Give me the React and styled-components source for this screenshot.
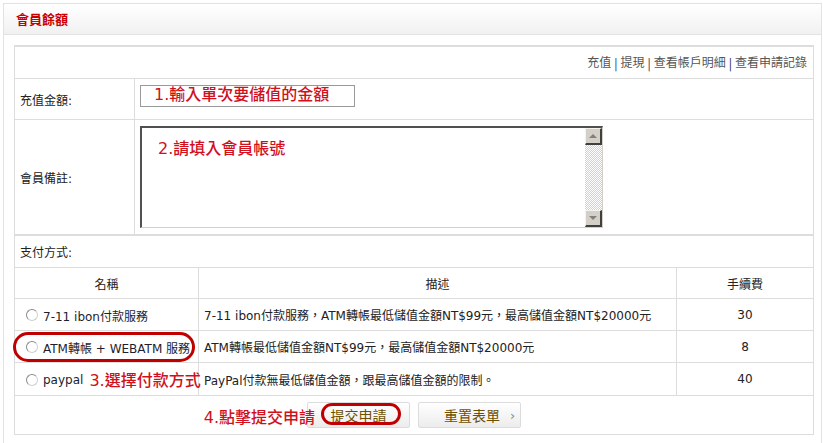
import React from 'react'
import styled, { createGlobalStyle } from 'styled-components'

const GlobalStyle = createGlobalStyle`
    body {
        margin: 0;
        background: #fff;
        font-family: "DejaVu Sans", "Noto Sans CJK TC", sans-serif;
        font-size: 12px;
        color: #333;
    }
`

const payments = [
    { id: 'ibon', name: '7-11 ibon付款服務', desc: '7-11 ibon付款服務，ATM轉帳最低儲值金額NT$99元，最高儲值金額NT$20000元', fee: 30 },
    { id: 'atm', name: 'ATM轉帳 + WEBATM 服務', desc: 'ATM轉帳最低儲值金額NT$99元，最高儲值金額NT$20000元', fee: 8, circled: true },
    { id: 'paypal', name: 'paypal', desc: 'PayPal付款無最低儲值金額，跟最高儲值金額的限制。', fee: 40, note: '3.選擇付款方式' },
]

function App() {
    return (
        <>
            <GlobalStyle />
            <Panel>
                <PanelHeader>
                    <PanelTitle>會員餘額</PanelTitle>
                </PanelHeader>
                <PanelBody>
                    <Form>
                        <LinksRow>
                            <LinkItem>充值</LinkItem><Sep>|</Sep>
                            <LinkItem>提現</LinkItem><Sep>|</Sep>
                            <LinkItem>查看帳戶明細</LinkItem><Sep>|</Sep>
                            <LinkItem>查看申請記錄</LinkItem>
                        </LinksRow>

                        <Row height={40}>
                            <Label>充值金額:</Label>
                            <Value top={6}>
                                <AmountInput>
                                    <Hint>1.輸入單次要儲值的金額</Hint>
                                </AmountInput>
                            </Value>
                        </Row>

                        <Row height={114} thick>
                            <Label>會員備註:</Label>
                            <Value center>
                                <TextArea>
                                    <TextContent>
                                        <Hint>2.請填入會員帳號</Hint>
                                    </TextContent>
                                    <ScrollBar>
                                        <ScrollButton>
                                            <Arrow up />
                                        </ScrollButton>
                                        <ScrollTrack />
                                        <ScrollButton>
                                            <Arrow />
                                        </ScrollButton>
                                    </ScrollBar>
                                </TextArea>
                            </Value>
                        </Row>

                        <Row height={31}>
                            <PlainLabel>支付方式:</PlainLabel>
                        </Row>

                        <PayHead>
                            <NameCell center>名稱</NameCell>
                            <DescCell center>描述</DescCell>
                            <FeeCell>手續費</FeeCell>
                        </PayHead>

                        {payments.map((p, i) => (
                            <PayRow key={p.id} tall={i === 2}>
                                <NameCell>
                                    <Radio />
                                    <OptionText>{p.name}</OptionText>
                                    {p.note && <InlineNote>{p.note}</InlineNote>}
                                    {p.circled && <RowCircle />}
                                </NameCell>
                                <DescCell>{p.desc}</DescCell>
                                <FeeCell>{p.fee}</FeeCell>
                            </PayRow>
                        ))}

                        <ButtonRow>
                            <Button>
                                <StepNote>4.點擊提交申請</StepNote>
                                提交申請
                                <ButtonCircle />
                            </Button>
                            <Button reset>
                                重置表單
                                <Chevron>›</Chevron>
                            </Button>
                        </ButtonRow>
                    </Form>
                </PanelBody>
            </Panel>
        </>
    )
}

export default App

const Panel = styled.div`
    margin: 3px 1px 0 3px;
    border: 1px solid #e2e2e2;
    border-bottom: none;
    height: 440px;
    box-sizing: border-box;
`

const PanelHeader = styled.div`
    height: 30px;
    display: flex;
    align-items: center;
    padding-left: 12px;
    background: linear-gradient(#ffffff, #f1f1f1);
    border-bottom: 1px solid #e3e3e3;
`

const PanelTitle = styled.div`
    color: #cc0000;
    font-weight: 700;
    font-size: 13px;
    line-height: 14px;
    padding-top: 1px;
`

const PanelBody = styled.div`
    padding: 10px 7px 0 10px;
`

const Form = styled.div`
    border: 1px solid #dddddd;
    border-top: 2px solid #dddddd;
`

const LinksRow = styled.div`
    height: 31px;
    display: flex;
    align-items: center;
    justify-content: flex-end;
    padding-right: 6px;
    border-bottom: 1px solid #dddddd;
    color: #555;
    line-height: 14px;
`

const LinkItem = styled.span`
    color: #555;
`

const Sep = styled.span`
    color: #1a1a4a;
    padding: 0 3px;
    font-family: "Noto Sans CJK TC", sans-serif;
`

const Row = styled.div`
    display: flex;
    height: ${p => p.height}px;
    border-bottom: ${p => (p.thick ? 2 : 1)}px solid #dddddd;
`

const Label = styled.div`
    width: 120px;
    border-right: 1px solid #dddddd;
    display: flex;
    align-items: center;
    padding-left: 5px;
    box-sizing: border-box;
    flex-shrink: 0;
    color: #222;
`

const PlainLabel = styled.div`
    display: flex;
    align-items: center;
    padding-left: 5px;
    color: #222;
`

const Value = styled.div`
    flex: 1;
    display: flex;
    align-items: ${p => (p.center ? 'center' : 'flex-start')};
    padding-left: 5px;
    padding-top: ${p => p.top || 0}px;
`

const AmountInput = styled.div`
    width: 215px;
    height: 22px;
    box-sizing: border-box;
    border: 1px solid #999;
    display: flex;
    align-items: center;
    padding-left: 13px;
    padding-bottom: 3px;
`

const Hint = styled.span`
    color: #d0101c;
    font-size: 16px;
    font-weight: 500;
    line-height: 18px;
`

const TextArea = styled.div`
    width: 463px;
    height: 102px;
    box-sizing: border-box;
    display: flex;
    border-top: 2px solid #505050;
    border-left: 2px solid #505050;
    border-right: 1px solid #d4d0c8;
    border-bottom: 1px solid #d4d0c8;
    background: #fff;
`

const TextContent = styled.div`
    flex: 1;
    padding: 12px 0 0 16px;
`

const ScrollBar = styled.div`
    width: 17px;
    display: flex;
    flex-direction: column;
`

const ScrollButton = styled.div`
    height: 17px;
    box-sizing: border-box;
    background: #d4d0c8;
    border-top: 1px solid #f4f3ef;
    border-left: 1px solid #f4f3ef;
    border-right: 2px solid #404040;
    border-bottom: 2px solid #404040;
    display: flex;
    align-items: center;
    justify-content: center;
`

const Arrow = styled.span`
    width: 0;
    height: 0;
    border-left: 4px solid transparent;
    border-right: 4px solid transparent;
    ${p => (p.up ? 'border-bottom: 4px solid #808080;' : 'border-top: 4px solid #808080;')}
`

const ScrollTrack = styled.div`
    flex: 1;
    background-color: #fff;
    background-image: repeating-conic-gradient(#d4d0c8 0 25%, #ffffff 0 50%);
    background-size: 2px 2px;
`

const PayHead = styled.div`
    display: flex;
    height: 30px;
    border-bottom: 1px solid #dddddd;
    color: #222;
`

const PayRow = styled.div`
    display: flex;
    height: ${p => (p.tall ? 32 : 31)}px;
    border-bottom: 1px solid #dddddd;
`

const NameCell = styled.div`
    position: relative;
    width: 184px;
    flex-shrink: 0;
    box-sizing: border-box;
    border-right: 1px solid #dddddd;
    display: flex;
    align-items: center;
    justify-content: ${p => (p.center ? 'center' : 'flex-start')};
    padding-left: ${p => (p.center ? 0 : 11)}px;
    white-space: nowrap;
`

const DescCell = styled.div`
    width: 478px;
    flex-shrink: 0;
    box-sizing: border-box;
    border-right: 1px solid #dddddd;
    display: flex;
    align-items: center;
    justify-content: ${p => (p.center ? 'center' : 'flex-start')};
    padding-left: ${p => (p.center ? 0 : 5)}px;
    white-space: nowrap;
    color: #222;
`

const FeeCell = styled.div`
    flex: 1;
    display: flex;
    align-items: center;
    justify-content: center;
    color: #222;
`

const Radio = styled.span`
    width: 10px;
    height: 10px;
    border-radius: 50%;
    border: 1px solid #8a8a8a;
    border-right-color: #d0d0d0;
    border-bottom-color: #d0d0d0;
    background: #fff;
    margin-right: 5px;
    margin-top: 1px;
    flex-shrink: 0;
`

const OptionText = styled.span`
    color: #1e1e2e;
    padding-top: 2px;
`

const InlineNote = styled.span`
    color: #d0101c;
    font-size: 16px;
    font-weight: 500;
    margin-left: 6px;
`

const RowCircle = styled.span`
    position: absolute;
    left: -2px;
    top: 1px;
    width: 182px;
    height: 30px;
    box-sizing: border-box;
    border: 3px solid #c00000;
    border-radius: 16px;
`

const ButtonRow = styled.div`
    height: 38px;
    display: flex;
    justify-content: center;
    align-items: flex-start;
    gap: 8px;
    padding-top: 6px;
    box-sizing: border-box;
`

const Button = styled.div`
    position: relative;
    width: 103px;
    height: 26px;
    box-sizing: border-box;
    border: 1px solid #dcdcdc;
    border-radius: 2px;
    background: linear-gradient(#ffffff, #ececec);
    color: #6e5000;
    font-size: 14px;
    display: flex;
    align-items: center;
    justify-content: ${p => (p.reset ? 'flex-start' : 'center')};
    padding-left: ${p => (p.reset ? 25 : 0)}px;
`

const Chevron = styled.span`
    color: #888;
    font-size: 13px;
    margin-left: 10px;
`

const StepNote = styled.span`
    position: absolute;
    right: 94px;
    top: 1px;
    color: #d0101c;
    font-size: 16px;
    font-weight: 500;
    white-space: nowrap;
`

const ButtonCircle = styled.span`
    position: absolute;
    left: 13px;
    top: 0px;
    width: 80px;
    height: 22px;
    box-sizing: border-box;
    border: 3px solid #c00000;
    border-radius: 12px;
`
